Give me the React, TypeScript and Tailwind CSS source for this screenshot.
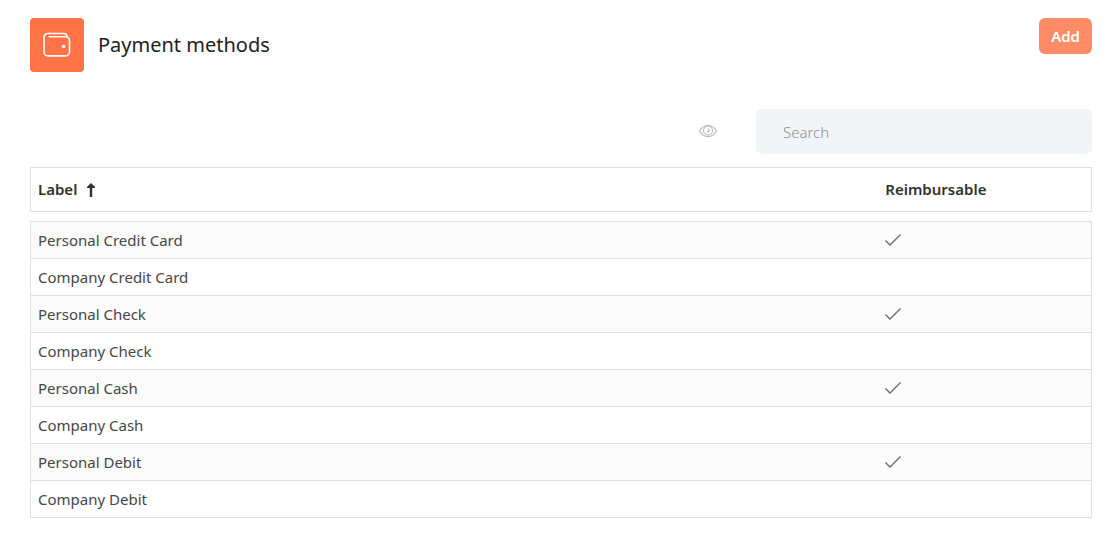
import { useState } from 'react'

interface PaymentMethod {
  id: number
  label: string
  reimbursable: boolean
}

const METHODS: PaymentMethod[] = [
  { id: 1, label: 'Personal Credit Card', reimbursable: true },
  { id: 2, label: 'Company Credit Card', reimbursable: false },
  { id: 3, label: 'Personal Check', reimbursable: true },
  { id: 4, label: 'Company Check', reimbursable: false },
  { id: 5, label: 'Personal Cash', reimbursable: true },
  { id: 6, label: 'Company Cash', reimbursable: false },
  { id: 7, label: 'Personal Debit', reimbursable: true },
  { id: 8, label: 'Company Debit', reimbursable: false },
]

function WalletIcon() {
  return (
    <svg
      className="h-7 w-7"
      viewBox="0 0 28 28"
      fill="none"
      stroke="currentColor"
      strokeWidth={1.6}
      strokeLinecap="round"
      strokeLinejoin="round"
    >
      <path d="M24 6V5.700a3.200 3.200 0 0 0-3.200-3.200H4.600A3.600 3.600 0 0 0 1 6.100v14.800a4 4 0 0 0 4 4h17.500a4 4 0 0 0 4-4V9.400a3.600 3.600 0 0 0-3.600-3.600H6.200" />
      <circle cx="20.500" cy="15.500" r="1.800" fill="currentColor" stroke="none" />
    </svg>
  )
}

function EyeIcon() {
  return (
    <svg className="h-[18px] w-[18px]" viewBox="0 0 18 18" fill="none" stroke="currentColor" strokeWidth={1.1}>
      <path d="M.5 8C2.600 4.300 5.500 2.500 9 2.500S15.400 4.300 17.500 8C15.400 11.700 12.500 13.500 9 13.500S2.600 11.700.5 8Z" />
      <circle cx="9" cy="7.500" r="4.500" />
      <path d="M9 5.500a2 2 0 1 1-2 3h2Z" fill="currentColor" stroke="none" />
    </svg>
  )
}

function CheckIcon() {
  return (
    <svg
      className="h-4 w-4"
      viewBox="0 0 16 16"
      fill="none"
      stroke="currentColor"
      strokeWidth={1.3}
      role="img"
      aria-label="Yes"
    >
      <path d="M.5 8.500 5 13 15.500 2.500" />
    </svg>
  )
}

function SortArrow() {
  return (
    <svg className="h-4 w-2" viewBox="0 0 8 16" fill="currentColor" aria-hidden="true">
      <path d="M4 1 8 5V6H5.200V15H2.800V6H0V5Z" />
    </svg>
  )
}

export default function App() {
  const [query, setQuery] = useState('')
  const [ascending, setAscending] = useState(true)

  const rows = METHODS.filter((m) => m.label.toLowerCase().includes(query.toLowerCase()))
  const sorted = ascending ? rows : [...rows].reverse()

  return (
    <main className="bg-white pt-[18px] pr-7 pb-3.5 pl-[30px] font-['Noto_Sans',sans-serif] text-[#464646]">
      <header className="flex items-start justify-between">
        <div className="flex items-center gap-3.5">
          <div className="flex h-[54px] w-[54px] items-center justify-center rounded bg-[#ff7346] text-white">
            <WalletIcon />
          </div>
          <h1 className="text-xl text-[#212121]">Payment methods</h1>
        </div>
        <button type="button" className="h-9 rounded-md bg-[#ff8c67] px-3 text-[15px] font-semibold text-white">
          Add
        </button>
      </header>

      <div className="mt-[37px] flex items-center justify-end gap-[39px]">
        <button type="button" aria-label="Visible columns" className="text-[#b5b5c3]">
          <EyeIcon />
        </button>
        <input
          type="search"
          aria-label="Search"
          placeholder="Search"
          value={query}
          onChange={(e) => setQuery(e.target.value)}
          className="h-[45px] w-[336px] rounded-md bg-[#f1f5f8] px-[27px] text-[15px] font-light outline-none placeholder:text-[#8f8f8f]"
        />
      </div>

      <table className="mt-[13px] w-full table-fixed border-collapse text-left text-[15px]">
        <thead>
          <tr className="h-11 border border-[#dee0e4] text-[#303030]">
            <th className="w-4/5 px-[7px] font-semibold">
              <button type="button" className="flex items-center gap-2.5" onClick={() => setAscending(!ascending)}>
                Label
                <SortArrow />
              </button>
            </th>
            <th className="px-1.5 font-semibold">Reimbursable</th>
          </tr>
        </thead>
        <tbody>
          {/* gap between the header box and the rows */}
          <tr className="h-2.5" aria-hidden="true">
            <td colSpan={2} />
          </tr>
          {sorted.map((method) => (
            <tr key={method.id} className="h-[37px] border border-[#dee0e4] even:bg-[#fbfbfb]">
              <td className="px-[7px]">{method.label}</td>
              <td className="px-1.5 text-[#666]">{method.reimbursable && <CheckIcon />}</td>
            </tr>
          ))}
        </tbody>
      </table>
    </main>
  )
}
